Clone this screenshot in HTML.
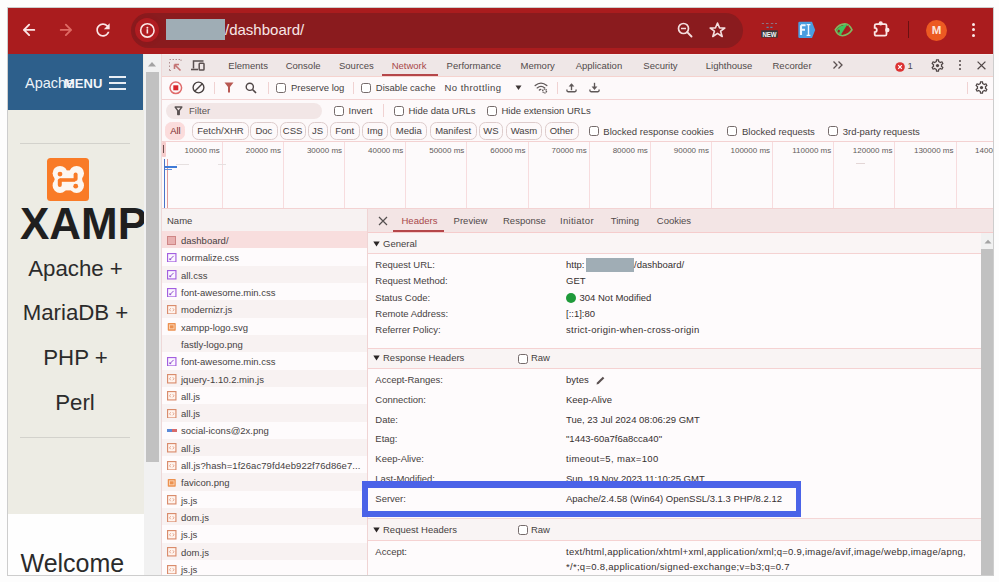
<!DOCTYPE html>
<html><head><meta charset="utf-8">
<style>
*{box-sizing:border-box;margin:0;padding:0}
html,body{width:999px;height:582px;overflow:hidden;background:#fdfdfd;font-family:"Liberation Sans",sans-serif}
.a{position:absolute}
.t{position:absolute;white-space:nowrap;font-size:9.5px;line-height:12px;color:#463f3f}
#frame{left:7px;top:7px;width:987px;height:569px;border:1px solid #cdcdcd;background:#fff}
#chrome{left:8px;top:8px;width:985px;height:46px;background:#aa1c1e}
#omni{left:130.5px;top:12.8px;width:612px;height:35px;border-radius:17.5px;background:#8a1b1e}
#page{left:8px;top:54px;width:135.5px;height:521px;background:#edece4;overflow:hidden}
#pscroll{left:143.5px;top:54px;width:17.5px;height:521px;background:#f1f1f1}
#dt{left:161px;top:54px;width:832px;height:521px;background:#fdf9fa;overflow:hidden}
.cb{position:absolute;width:10px;height:10px;border:1px solid #756b6b;border-radius:2.5px;background:#fff}
.sep{position:absolute;width:1px;background:#f0d2d2}
.chip{position:absolute;height:17.4px;border:1px solid #ddcccc;border-radius:6.5px;font-size:9.5px;line-height:15.6px;text-align:center;color:#463f3f;white-space:nowrap}
</style></head>
<body>
<div id="frame" class="a"></div>
<div id="chrome" class="a"></div>
<div id="omni" class="a"></div>

<!-- chrome toolbar icons -->
<svg class="a" style="left:20px;top:22px" width="18" height="16" viewBox="0 0 18 16"><path d="M3.95 7.9H14.25M3.95 7.9L9.15 2.7M3.95 7.9L9.15 13.1" stroke="#fbe6e6" stroke-width="1.9" fill="none" stroke-linecap="round" stroke-linejoin="round"/></svg>
<svg class="a" style="left:56px;top:22px" width="18" height="16" viewBox="0 0 18 16"><path d="M4.75 7.9H15.05M15.05 7.9L9.85 2.7M15.05 7.9L9.85 13.1" stroke="#df6a64" stroke-width="1.9" fill="none" stroke-linecap="round" stroke-linejoin="round"/></svg>
<svg class="a" style="left:93.2px;top:19.9px" width="20" height="20" viewBox="0 0 24 24"><path fill="#fbe6e6" d="M17.65 6.35C16.2 4.9 14.21 4 12 4c-4.42 0-7.99 3.58-7.99 8s3.57 8 7.99 8c3.730 0 6.84-2.55 7.73-6h-2.08c-.82 2.33-3.04 4-5.65 4-3.31 0-6-2.69-6-6s2.69-6 6-6c1.66 0 3.14.69 4.22 1.78L13 11h7V4l-2.35 2.35z"/></svg>
<div class="a" style="left:135.3px;top:17.9px;width:24px;height:24px;border-radius:50%;background:#b01c21;box-shadow:0 0 3px 1px #8a181c"></div>
<svg class="a" style="left:139px;top:21.5px" width="17" height="17" viewBox="0 0 17 17"><circle cx="8.35" cy="8.4" r="6.7" stroke="#fbe6e6" stroke-width="1.6" fill="none"/><circle cx="8.35" cy="5.7" r="1" fill="#fbe6e6"/><rect x="7.55" y="7.2" width="1.6" height="4.3" fill="#fbe6e6"/></svg>
<div class="a" style="left:166px;top:18.6px;width:59px;height:21.3px;background:#9fadb5"></div>
<div class="t" style="left:225px;top:21px;font-size:15px;line-height:18px;color:#f7e6e6">/dashboard/</div>
<svg class="a" style="left:676px;top:21px" width="18" height="18" viewBox="0 0 18 18"><circle cx="7.5" cy="7.5" r="5" stroke="#f4dede" stroke-width="1.7" fill="none"/><path d="M5 7.5H10" stroke="#f4dede" stroke-width="1.5"/><path d="M11.2 11.2L15.5 15.5" stroke="#f4dede" stroke-width="1.9" stroke-linecap="round"/></svg>
<svg class="a" style="left:708px;top:21px" width="19" height="18" viewBox="0 0 19 18"><path d="M9.5 2L11.6 7H16.8L12.6 10.2L14.2 15.5L9.5 12.3L4.8 15.5L6.4 10.2L2.2 7H7.4Z" stroke="#f4dede" stroke-width="1.6" fill="none" stroke-linejoin="round"/></svg>
<!-- NEW ext -->
<svg class="a" style="left:760px;top:21px" width="19" height="18" viewBox="0 0 19 18"><path d="M1.8 2.5h2.2M6 2.5h2.5M10.8 2.5h2.5M15 2.5h2" stroke="#8f7080" stroke-width="1.2"/><path d="M6.5 6.4h2.2M10.3 6.4h2.2" stroke="#5f86a8" stroke-width="1.3"/><rect x="1.2" y="9.3" width="16.6" height="7.3" fill="#3a3a3d"/><text x="9.5" y="15.6" font-family="Liberation Sans" font-weight="bold" font-size="7" fill="#f6f6f6" text-anchor="middle" textLength="14.2" lengthAdjust="spacingAndGlyphs">NEW</text></svg>
<!-- FI ext -->
<svg class="a" style="left:797px;top:21px" width="20" height="18" viewBox="0 0 20 18"><path d="M2.6 0.8H15L18.2 9L15 17.1H2.6Q1.3 17.1 1.3 15.8V2.1Q1.3 0.8 2.6 0.8Z" fill="#4a9de0"/><path d="M4 4.2H8.6M4 4.2V14M4 8.8H8" stroke="#eef6ff" stroke-width="2.1" fill="none"/><path d="M9.6 3.6H13.4M11.5 3.6V14.4M9.6 14.4H13.4" stroke="#eef6ff" stroke-width="1.4" fill="none"/></svg>
<!-- eye ext -->
<svg class="a" style="left:833px;top:22px" width="21" height="16" viewBox="0 0 21 16"><path d="M2.3 7.8C5 3.5 9 1.9 12 1.9C15 2 17.5 4.5 19 7.8C16.5 11.5 13 13.6 9.5 13.6C6 13.6 3.5 11 2.3 7.8Z" stroke="#7fba62" stroke-width="1.6" fill="none"/><path d="M14.6 2.1L7.4 13.4L3.2 8.2Q6 3.6 14.6 2.1Z" fill="#3cc55c"/><ellipse cx="5.8" cy="9" rx="1.1" ry="1.6" fill="#9a1c1e"/><path d="M15.6 3.5L9.5 12.8" stroke="#9a1c1e" stroke-width="0.9"/></svg>
<!-- puzzle -->
<svg class="a" style="left:870px;top:18px" width="22" height="22" viewBox="0 0 22 22"><path d="M6.3 6.1H15Q16.5 6.1 16.5 7.6V16.2Q16.5 17.7 15 17.7H6.2Q4.7 17.7 4.7 16.2V14.1A2.1 2.1 0 0 0 4.7 9.9V7.6Q4.7 6.1 6.3 6.1Z" stroke="#fbe6e6" stroke-width="1.8" fill="none"/><circle cx="10.7" cy="5.4" r="2.1" fill="#fbe6e6"/><circle cx="17.3" cy="12" r="2.2" fill="#fbe6e6"/></svg>
<div class="a" style="left:908.3px;top:20.5px;width:1.2px;height:17.5px;background:#6a1011"></div>
<div class="a" style="left:926px;top:19.5px;width:21px;height:21px;border-radius:50%;background:#ec5a22"></div>
<div class="t" style="left:926px;top:24px;width:21px;text-align:center;font-size:11.5px;line-height:12px;color:#fde6dc;font-weight:bold">M</div>
<div class="a" style="left:972px;top:22.8px;width:3.2px;height:3.2px;border-radius:50%;background:#fbeaea"></div>
<div class="a" style="left:972px;top:28.1px;width:3.2px;height:3.2px;border-radius:50%;background:#fbeaea"></div>
<div class="a" style="left:972px;top:34.1px;width:3.2px;height:3.2px;border-radius:50%;background:#fbeaea"></div>
<div id="page" class="a">
<div class="a" style="left:0;top:0;width:135px;height:56px;background:#2d5f8b"></div>
<div class="t" style="left:17px;top:21.7px;font-size:14.5px;line-height:14.5px;color:#eef3f8">Apache</div>
<div class="t" style="left:56px;top:23.1px;font-size:13px;line-height:13px;color:#f3f6fa;font-weight:bold">MENU</div>
<div class="a" style="left:101.2px;top:22px;width:17px;height:2px;background:#e8eef5"></div>
<div class="a" style="left:101.2px;top:27.8px;width:17px;height:2px;background:#e8eef5"></div>
<div class="a" style="left:101.2px;top:33.6px;width:17px;height:2px;background:#e8eef5"></div>
<div class="a" style="left:12.3px;top:89px;width:109.3px;height:1px;background:#d3d2cc"></div>
<div class="a" style="left:38.9px;top:104px;width:42.5px;height:43.4px;border-radius:3.5px;background:#f97b27"></div>
<svg class="a" style="left:38.9px;top:104px" width="43" height="44" viewBox="0 0 43 44"><g fill="#fdf7f1"><circle cx="13" cy="15.3" r="7.4"/><circle cx="29.6" cy="15.3" r="7.4"/><circle cx="13" cy="27.5" r="7.4"/><circle cx="29.6" cy="27.5" r="7.4"/><rect x="13" y="12.4" width="16.6" height="20"/><rect x="7.6" y="15.3" width="27.6" height="12.2"/></g><g fill="#f97b27"><circle cx="13" cy="16.1" r="2.4"/><rect x="10.8" y="20.4" width="4" height="8.6" rx="2"/><rect x="12.7" y="20.2" width="15.6" height="3.6"/><rect x="26.6" y="14.6" width="4" height="8.4" rx="2"/><circle cx="28.7" cy="28.2" r="2.4"/></g></svg>
<div class="t" style="left:11.9px;top:147.65px;font-size:44px;line-height:44px;font-weight:bold;color:#1f1f1f">XAMPP</div>
<div class="t" style="left:0;top:204.4px;width:135px;text-align:center;font-size:22.25px;line-height:22.25px;color:#2b2b2b">Apache +</div>
<div class="t" style="left:0;top:248.4px;width:135px;text-align:center;font-size:22.25px;line-height:22.25px;color:#2b2b2b">MariaDB +</div>
<div class="t" style="left:0;top:293px;width:135px;text-align:center;font-size:22.25px;line-height:22.25px;color:#2b2b2b">PHP +</div>
<div class="t" style="left:0;top:338.4px;width:134px;text-align:center;font-size:22.25px;line-height:22.25px;color:#2b2b2b">Perl</div>
<div class="a" style="left:12.3px;top:383px;width:109.3px;height:1px;background:#d3d2cc"></div>
<div class="a" style="left:0;top:459.5px;width:135.5px;height:62px;background:#fefefe"></div>
<div class="t" style="left:12.5px;top:496.9px;font-size:25px;line-height:25px;color:#2b2b2b">Welcome</div>
</div>
<div id="pscroll" class="a">
<svg class="a" style="left:3.5px;top:6.5px" width="10" height="6" viewBox="0 0 10 6"><path d="M1 5.5L5 1L9 5.5Z" fill="#a3a3a3"/></svg>
<div class="a" style="left:2px;top:18px;width:13.3px;height:389.5px;background:#c1c1c1"></div>
</div>
<div id="dt" class="a">
<div class="a" style="left:0;top:0;width:1px;height:521px;background:#eed8d8"></div>
<div class="a" style="left:1px;top:0;width:831px;height:23px;background:#efe7e7;border-top:1.5px solid #f8eded;border-bottom:1px solid #f5d3cf"></div>
<svg class="a" style="left:7px;top:4px" width="15" height="14" viewBox="0 0 15 14"><path d="M1.5 1.5h1.5M4.5 1.5h1.5M7.5 1.5h1.5M10.5 1.5h1.5M1.5 4v1.5M1.5 7.5v1.5M1.5 11v1.5h1.5" stroke="#b09090" stroke-width="1" fill="none"/><path d="M13 1.5v1.5" stroke="#b09090" stroke-width="1"/><path d="M6.5 6.5L12.5 12.5M6.5 6.5h4.5M6.5 6.5v4.5" stroke="#c47474" stroke-width="1.6" fill="none"/></svg>
<svg class="a" style="left:29px;top:5px" width="16" height="13" viewBox="0 0 16 13"><path d="M3.5 9.5V2h10" stroke="#5a5050" stroke-width="1.5" fill="none"/><path d="M1 10.5h7" stroke="#5a5050" stroke-width="1.6"/><rect x="9.2" y="4.2" width="4.8" height="6.8" rx="0.8" stroke="#5a5050" stroke-width="1.5" fill="none"/></svg>
<div class="t" style="left:67.3px;top:5.71px;color:#514a4a">Elements</div>
<div class="t" style="left:124.7px;top:5.71px;color:#514a4a">Console</div>
<div class="t" style="left:178px;top:5.71px;color:#514a4a">Sources</div>
<div class="t" style="left:230.7px;top:5.71px;color:#a8484a">Network</div>
<div class="t" style="left:285.6px;top:5.71px;color:#514a4a">Performance</div>
<div class="t" style="left:359.5px;top:5.71px;color:#514a4a">Memory</div>
<div class="t" style="left:414.7px;top:5.71px;color:#514a4a">Application</div>
<div class="t" style="left:482.3px;top:5.71px;color:#514a4a">Security</div>
<div class="t" style="left:544.8px;top:5.71px;color:#514a4a">Lighthouse</div>
<div class="t" style="left:611.5px;top:5.71px;color:#514a4a">Recorder</div>
<div class="a" style="left:220.8px;top:20.3px;width:56px;height:2px;background:#b5474a"></div>
<svg class="a" style="left:671px;top:6px" width="13" height="10" viewBox="0 0 13 10"><path d="M1.5 1.5L5 5L1.5 8.5M6.5 1.5L10 5L6.5 8.5" stroke="#5a5050" stroke-width="1.3" fill="none"/></svg>
<svg class="a" style="left:734px;top:7.6px" width="10" height="10" viewBox="0 0 10 10"><circle cx="5" cy="5" r="4.8" fill="#dc3232"/><path d="M3.2 3.2L6.8 6.8M6.8 3.2L3.2 6.8" stroke="#fff" stroke-width="1.2"/></svg>
<div class="t" style="left:746.5px;top:5.71px;color:#514a4a">1</div>
<svg class="a" style="left:768.9px;top:3.7px" width="15" height="15" viewBox="0 0 24 24"><path fill="#4f4646" d="M19.43 12.98c.04-.32.07-.64.07-.98 0-.34-.03-.66-.07-.98l2.11-1.65c.19-.15.24-.42.12-.64l-2-3.46a.5.5 0 0 0-.61-.22l-2.49 1c-.52-.4-1.08-.73-1.690-.98l-.38-2.65A.488.488 0 0 0 14 2h-4c-.25 0-.46.18-.49.42l-.38 2.65c-.61.25-1.17.59-1.69.98l-2.49-1a.566.566 0 0 0-.18-.03c-.17 0-.34.09-.43.25l-2 3.46c-.13.22-.07.49.12.64l2.11 1.65c-.04.32-.07.65-.07.98 0 .33.03.66.07.98l-2.11 1.65c-.19.15-.24.42-.12.64l2 3.46a.5.5 0 0 0 .61.22l2.49-1c.52.4 1.08.73 1.69.98l.38 2.65c.03.24.24.42.49.42h4c.25 0 .46-.18.49-.42l.38-2.650c.61-.25 1.17-.59 1.69-.98l2.49 1c.06.02.12.03.18.03.17 0 .34-.09.43-.25l2-3.46c.12-.22.07-.49-.12-.64l-2.11-1.65zm-1.98-1.71c.04.31.05.52.05.73 0 .21-.02.43-.05.73l-.14 1.13.89.7 1.08.84-.7 1.21-1.27-.51-1.04-.42-.9.68c-.43.32-.84.56-1.25.73l-1.06.43-.16 1.13-.2 1.35h-1.4l-.19-1.35-.16-1.13-1.06-.43c-.43-.18-.83-.41-1.23-.71l-.91-.7-1.06.43-1.27.51-.7-1.21 1.08-.84.89-.7-.14-1.13c-.03-.31-.05-.54-.05-.74s.02-.43.05-.73l.14-1.13-.89-.7-1.08-.84.7-1.21 1.27.51 1.04.42.9-.68c.43-.32.84-.56 1.25-.73l1.06-.43.16-1.13.2-1.35h1.390l.19 1.35.16 1.13 1.06.43c.43.18.83.41 1.23.71l.91.7 1.06-.43 1.27-.51.7 1.21-1.07.85-.89.7.14 1.13z"/><circle cx="12" cy="12" r="2.6" fill="#4f4646"/></svg>
<div class="a" style="left:797.6px;top:6.2px;width:2.2px;height:2.2px;border-radius:50%;background:#4f4646"></div>
<div class="a" style="left:797.6px;top:10.1px;width:2.2px;height:2.2px;border-radius:50%;background:#4f4646"></div>
<div class="a" style="left:797.6px;top:14px;width:2.2px;height:2.2px;border-radius:50%;background:#4f4646"></div>
<svg class="a" style="left:816.3px;top:6.5px" width="10" height="9" viewBox="0 0 10 9"><path d="M0.6 0.6L8.4 8.2M8.4 0.6L0.6 8.2" stroke="#4f4646" stroke-width="1.2"/></svg>
<div class="a" style="left:1px;top:45px;width:831px;height:1px;background:#f3d2d2"></div>
<svg class="a" style="left:7.5px;top:26.7px" width="14" height="14" viewBox="0 0 14 14"><circle cx="6.8" cy="6.8" r="5.8" stroke="#e06b6b" stroke-width="1.5" fill="none"/><rect x="4.3" y="4.3" width="5" height="5" fill="#d8252b"/></svg>
<svg class="a" style="left:30.5px;top:27px" width="13" height="13" viewBox="0 0 13 13"><circle cx="6.5" cy="6.5" r="5.4" stroke="#484040" stroke-width="1.4" fill="none"/><path d="M10.3 2.7L2.7 10.3" stroke="#484040" stroke-width="1.4"/></svg>
<div class="sep" style="left:52.5px;top:28px;height:12px"></div>
<svg class="a" style="left:63px;top:28px" width="10" height="11" viewBox="0 0 10 11"><path d="M0.5 0.5H9.5L6 5V10.5H4V5Z" fill="#b85852"/></svg>
<svg class="a" style="left:84px;top:27.5px" width="12" height="12" viewBox="0 0 12 12"><circle cx="4.8" cy="4.8" r="3.6" stroke="#4f4646" stroke-width="1.4" fill="none"/><path d="M7.5 7.5L11 11" stroke="#4f4646" stroke-width="1.6"/></svg>
<div class="sep" style="left:107px;top:28px;height:12px"></div>
<div class="cb" style="left:114.5px;top:28.7px"></div>
<div class="t" style="left:130px;top:28.21px;">Preserve log</div>
<div class="sep" style="left:191.7px;top:28px;height:12px"></div>
<div class="cb" style="left:200px;top:28.7px"></div>
<div class="t" style="left:214.8px;top:28.21px;">Disable cache</div>
<div class="t" style="left:283.5px;top:28.21px;;letter-spacing:0.45px">No throttling</div>
<svg class="a" style="left:354px;top:30.5px" width="7" height="6" viewBox="0 0 7 6"><path d="M0.5 0.5H6.5L3.5 5Z" fill="#3c3535"/></svg>
<svg class="a" style="left:373px;top:27px" width="15" height="13" viewBox="0 0 15 13"><path d="M1.2 4.6Q7 -0.3 12.8 4.6M3.2 6.9Q7 3.8 10.8 6.9M5.4 9.1Q6 8.6 6.8 8.4" stroke="#5f5858" stroke-width="1.35" fill="none" stroke-linecap="round"/><circle cx="10.6" cy="10" r="1.9" fill="none" stroke="#5f5858" stroke-width="1.4" stroke-dasharray="1.2 0.6"/></svg>
<div class="sep" style="left:396px;top:28px;height:12px"></div>
<svg class="a" style="left:405px;top:28.4px" width="11" height="11" viewBox="0 0 11 11"><path d="M5.5 8.2V2.5" stroke="#5f5858" stroke-width="1.35"/><path d="M2.6 4.6L5.5 1.2L8.4 4.6Z" fill="#5f5858"/><path d="M0.9 7.4V8.6Q0.9 9.7 2 9.7H9Q10.1 9.7 10.1 8.6V7.4" stroke="#5f5858" stroke-width="1.35" fill="none"/></svg>
<svg class="a" style="left:427.8px;top:28.4px" width="11" height="11" viewBox="0 0 11 11"><path d="M5.5 0.8V6" stroke="#5f5858" stroke-width="1.35"/><path d="M2.6 4.6L5.5 8L8.4 4.6Z" fill="#5f5858"/><path d="M0.9 7.4V8.6Q0.9 9.7 2 9.7H9Q10.1 9.7 10.1 8.6V7.4" stroke="#5f5858" stroke-width="1.35" fill="none"/></svg>
<div class="sep" style="left:806px;top:28px;height:12px"></div>
<svg class="a" style="left:813.3px;top:26.2px" width="15" height="15" viewBox="0 0 24 24"><path fill="#4f4646" d="M19.43 12.98c.04-.32.07-.64.07-.98 0-.34-.03-.66-.07-.98l2.11-1.65c.19-.15.24-.42.12-.64l-2-3.46a.5.5 0 0 0-.61-.22l-2.49 1c-.52-.4-1.08-.73-1.690-.98l-.38-2.65A.488.488 0 0 0 14 2h-4c-.25 0-.46.18-.49.42l-.38 2.65c-.61.25-1.17.59-1.69.98l-2.49-1a.566.566 0 0 0-.18-.03c-.17 0-.34.09-.43.25l-2 3.46c-.13.22-.07.49.12.64l2.11 1.65c-.04.32-.07.65-.07.98 0 .33.03.66.07.98l-2.11 1.65c-.19.15-.24.42-.12.64l2 3.46a.5.5 0 0 0 .61.22l2.49-1c.52.4 1.08.73 1.69.98l.38 2.65c.03.24.24.42.49.42h4c.25 0 .46-.18.49-.42l.38-2.650c.61-.25 1.17-.59 1.69-.98l2.49 1c.06.02.12.03.18.03.17 0 .34-.09.43-.25l2-3.46c.12-.22.07-.49-.12-.64l-2.11-1.65zm-1.98-1.71c.04.31.05.52.05.73 0 .21-.02.43-.05.73l-.14 1.13.89.7 1.08.84-.7 1.21-1.27-.51-1.04-.42-.9.68c-.43.32-.84.56-1.25.73l-1.06.43-.16 1.13-.2 1.35h-1.4l-.19-1.35-.16-1.13-1.06-.43c-.43-.18-.83-.41-1.23-.71l-.91-.7-1.06.43-1.27.51-.7-1.21 1.08-.84.89-.7-.14-1.13c-.03-.31-.05-.54-.05-.74s.02-.43.05-.73l.14-1.13-.89-.7-1.08-.84.7-1.21 1.27.51 1.04.42.9-.68c.43-.32.84-.56 1.25-.73l1.06-.43.16-1.13.2-1.35h1.390l.19 1.35.16 1.13 1.06.43c.43.18.83.41 1.23.71l.91.7 1.06-.43 1.27-.51.7 1.21-1.07.85-.89.7.14 1.13z"/><circle cx="12" cy="12" r="2.6" fill="#4f4646"/></svg>
<div class="a" style="left:5px;top:48.5px;width:156px;height:16.5px;border-radius:8.25px;background:#f2e6e6"></div>
<svg class="a" style="left:13.3px;top:52.2px" width="9" height="10" viewBox="0 0 9 10"><path d="M1.2 1.1H7.8L5.2 4.6V8.6H3.8V4.6Z" stroke="#5a5252" stroke-width="1.5" fill="none" stroke-linejoin="round"/></svg>
<div class="t" style="left:28px;top:51.21px;color:#5a5252">Filter</div>
<div class="cb" style="left:172.6px;top:51.8px"></div>
<div class="t" style="left:187.6px;top:51.21px;">Invert</div>
<div class="sep" style="left:221.8px;top:50px;height:13px"></div>
<div class="cb" style="left:232.6px;top:51.8px"></div>
<div class="t" style="left:247.5px;top:51.21px;">Hide data URLs</div>
<div class="cb" style="left:325.5px;top:51.8px"></div>
<div class="t" style="left:340.5px;top:51.21px;">Hide extension URLs</div>
<div class="chip" style="left:4.4px;top:68.2px;width:20.1px;border-color:#fbdcdc;background:#fbdcdc;color:#7a2a2a">All</div>
<div class="chip" style="left:31.4px;top:68.2px;width:56.2px">Fetch/XHR</div>
<div class="chip" style="left:89px;top:68.2px;width:27.7px">Doc</div>
<div class="chip" style="left:118.5px;top:68.2px;width:26.1px">CSS</div>
<div class="chip" style="left:146.7px;top:68.2px;width:19.9px">JS</div>
<div class="chip" style="left:168.7px;top:68.2px;width:30.0px">Font</div>
<div class="chip" style="left:200.8px;top:68.2px;width:26.4px">Img</div>
<div class="chip" style="left:229.3px;top:68.2px;width:37.0px">Media</div>
<div class="chip" style="left:268.7px;top:68.2px;width:46.9px">Manifest</div>
<div class="chip" style="left:318px;top:68.2px;width:24px">WS</div>
<div class="chip" style="left:345px;top:68.2px;width:36px">Wasm</div>
<div class="chip" style="left:383.5px;top:68.2px;width:34.2px">Other</div>
<div class="cb" style="left:427.6px;top:71.7px"></div>
<div class="t" style="left:442.3px;top:71.71px;">Blocked response cookies</div>
<div class="cb" style="left:566.3px;top:71.7px"></div>
<div class="t" style="left:581.0px;top:71.71px;">Blocked requests</div>
<div class="cb" style="left:667px;top:71.7px"></div>
<div class="t" style="left:681.7px;top:71.71px;">3rd-party requests</div>
<div class="a" style="left:1px;top:87.3px;width:831px;height:1px;background:#f3d2d2"></div>
<div class="a" style="left:1px;top:88.3px;width:831px;height:65.5px;background:#fdfafb"></div>
<div class="a" style="left:60.75px;top:88.3px;width:1px;height:65.5px;background:#f7dcde"></div>
<div class="t" style="left:-19.25px;top:91.5px;width:78px;text-align:right;font-size:8px;line-height:10px;color:#625a5a">10000 ms</div>
<div class="a" style="left:121.9px;top:88.3px;width:1px;height:65.5px;background:#f7dcde"></div>
<div class="t" style="left:41.9px;top:91.5px;width:78px;text-align:right;font-size:8px;line-height:10px;color:#625a5a">20000 ms</div>
<div class="a" style="left:183.05px;top:88.3px;width:1px;height:65.5px;background:#f7dcde"></div>
<div class="t" style="left:103.05px;top:91.5px;width:78px;text-align:right;font-size:8px;line-height:10px;color:#625a5a">30000 ms</div>
<div class="a" style="left:244.2px;top:88.3px;width:1px;height:65.5px;background:#f7dcde"></div>
<div class="t" style="left:164.2px;top:91.5px;width:78px;text-align:right;font-size:8px;line-height:10px;color:#625a5a">40000 ms</div>
<div class="a" style="left:305.35px;top:88.3px;width:1px;height:65.5px;background:#f7dcde"></div>
<div class="t" style="left:225.35px;top:91.5px;width:78px;text-align:right;font-size:8px;line-height:10px;color:#625a5a">50000 ms</div>
<div class="a" style="left:366.5px;top:88.3px;width:1px;height:65.5px;background:#f7dcde"></div>
<div class="t" style="left:286.5px;top:91.5px;width:78px;text-align:right;font-size:8px;line-height:10px;color:#625a5a">60000 ms</div>
<div class="a" style="left:427.65px;top:88.3px;width:1px;height:65.5px;background:#f7dcde"></div>
<div class="t" style="left:347.65px;top:91.5px;width:78px;text-align:right;font-size:8px;line-height:10px;color:#625a5a">70000 ms</div>
<div class="a" style="left:488.8px;top:88.3px;width:1px;height:65.5px;background:#f7dcde"></div>
<div class="t" style="left:408.8px;top:91.5px;width:78px;text-align:right;font-size:8px;line-height:10px;color:#625a5a">80000 ms</div>
<div class="a" style="left:549.95px;top:88.3px;width:1px;height:65.5px;background:#f7dcde"></div>
<div class="t" style="left:469.95px;top:91.5px;width:78px;text-align:right;font-size:8px;line-height:10px;color:#625a5a">90000 ms</div>
<div class="a" style="left:611.1px;top:88.3px;width:1px;height:65.5px;background:#f7dcde"></div>
<div class="t" style="left:531.1px;top:91.5px;width:78px;text-align:right;font-size:8px;line-height:10px;color:#625a5a">100000 ms</div>
<div class="a" style="left:672.25px;top:88.3px;width:1px;height:65.5px;background:#f7dcde"></div>
<div class="t" style="left:592.25px;top:91.5px;width:78px;text-align:right;font-size:8px;line-height:10px;color:#625a5a">110000 ms</div>
<div class="a" style="left:733.4px;top:88.3px;width:1px;height:65.5px;background:#f7dcde"></div>
<div class="t" style="left:653.4px;top:91.5px;width:78px;text-align:right;font-size:8px;line-height:10px;color:#625a5a">120000 ms</div>
<div class="a" style="left:794.55px;top:88.3px;width:1px;height:65.5px;background:#f7dcde"></div>
<div class="t" style="left:714.55px;top:91.5px;width:78px;text-align:right;font-size:8px;line-height:10px;color:#625a5a">130000 ms</div>
<div class="t" style="left:775.7px;top:91.5px;width:78px;text-align:right;font-size:8px;line-height:10px;color:#625a5a">140000 ms</div>
<div class="a" style="left:1px;top:153.5px;width:831px;height:1px;background:#f3d2d2"></div>
<div class="a" style="left:0.8px;top:88px;width:4px;height:15px;background:#f6cccc;border-radius:1px"></div>
<div class="a" style="left:2.2px;top:91px;width:1.2px;height:8px;background:#6a5050"></div>
<div class="a" style="left:3px;top:105px;width:1.3px;height:49px;background:#4a72c8"></div>
<div class="a" style="left:6px;top:105px;width:1.3px;height:49px;background:#e29a9a"></div>
<div class="a" style="left:3.6px;top:111.6px;width:12px;height:2px;background:#3f7ad6"></div>
<div class="a" style="left:3.6px;top:114.5px;width:7px;height:1.4px;background:#6a92d8"></div>
<div class="a" style="left:15px;top:109.8px;width:13px;height:1px;background:#e6e0e0"></div>
<div class="a" style="left:57px;top:109.8px;width:8px;height:1px;background:#e6e0e0"></div>
<div class="a" style="left:694.5px;top:109.3px;width:9px;height:1px;background:#e3d6d6"></div>

<div class="a" style="left:1px;top:154.5px;width:205px;height:22.5px;background:#f7f2f2"></div>
<div class="t" style="left:6px;top:160.71px;">Name</div>
<div class="a" style="left:1px;top:177.0px;width:205px;height:17.32px;background:#f8dede"></div>
<div class="a" style="left:6.2px;top:181.66px;width:9px;height:9px;border:1.2px solid #cf8686;background:#e8b0b0"></div>
<div class="t" style="left:20px;top:180.97px;color:#463f3f">dashboard/</div>
<div class="a" style="left:1px;top:194.32px;width:205px;height:17.32px;background:#fefbfc"></div>
<svg class="a" style="left:6.2px;top:198.88px" width="9.5" height="9.5" viewBox="0 0 10 10"><rect x="0.6" y="0.6" width="8.8" height="8.8" stroke="#a35fe0" stroke-width="1.2" fill="#fbf6ff"/><path d="M3 7L7 3M3 7V5.6M3 7H4.4" stroke="#8a48c8" stroke-width="1"/></svg>
<div class="t" style="left:20px;top:198.29px;color:#463f3f">normalize.css</div>
<div class="a" style="left:1px;top:211.64px;width:205px;height:17.32px;background:#f8f2f2"></div>
<svg class="a" style="left:6.2px;top:216.2px" width="9.5" height="9.5" viewBox="0 0 10 10"><rect x="0.6" y="0.6" width="8.8" height="8.8" stroke="#a35fe0" stroke-width="1.2" fill="#fbf6ff"/><path d="M3 7L7 3M3 7V5.6M3 7H4.4" stroke="#8a48c8" stroke-width="1"/></svg>
<div class="t" style="left:20px;top:215.61px;color:#463f3f">all.css</div>
<div class="a" style="left:1px;top:228.96px;width:205px;height:17.32px;background:#fefbfc"></div>
<svg class="a" style="left:6.2px;top:233.52px" width="9.5" height="9.5" viewBox="0 0 10 10"><rect x="0.6" y="0.6" width="8.8" height="8.8" stroke="#a35fe0" stroke-width="1.2" fill="#fbf6ff"/><path d="M3 7L7 3M3 7V5.6M3 7H4.4" stroke="#8a48c8" stroke-width="1"/></svg>
<div class="t" style="left:20px;top:232.93px;color:#463f3f">font-awesome.min.css</div>
<div class="a" style="left:1px;top:246.28px;width:205px;height:17.32px;background:#f8f2f2"></div>
<svg class="a" style="left:6.2px;top:250.84px" width="9.5" height="9.5" viewBox="0 0 10 10"><rect x="0.6" y="0.6" width="8.8" height="8.8" stroke="#d98c6c" stroke-width="1.2" fill="#fff4ee"/><path d="M3.9 3.4L2.7 5L3.9 6.6M6.1 3.4L7.3 5L6.1 6.6" stroke="#df9a80" stroke-width="0.9" fill="none"/></svg>
<div class="t" style="left:20px;top:250.25px;color:#463f3f">modernizr.js</div>
<div class="a" style="left:1px;top:263.6px;width:205px;height:17.32px;background:#fefbfc"></div>
<svg class="a" style="left:6.2px;top:268.16px" width="9.5" height="9.5" viewBox="0 0 10 10"><rect x="0.8" y="1" width="8.4" height="8.2" rx="0.8" fill="#ec9150"/><rect x="2.6" y="3" width="4.8" height="4.2" stroke="#fbd9bd" stroke-width="0.9" fill="none"/></svg>
<div class="t" style="left:20px;top:267.57px;color:#463f3f">xampp-logo.svg</div>
<div class="a" style="left:1px;top:280.92px;width:205px;height:17.32px;background:#f8f2f2"></div>
<div class="t" style="left:20px;top:284.89px;color:#463f3f">fastly-logo.png</div>
<div class="a" style="left:1px;top:298.24px;width:205px;height:17.32px;background:#fefbfc"></div>
<svg class="a" style="left:6.2px;top:302.8px" width="9.5" height="9.5" viewBox="0 0 10 10"><rect x="0.6" y="0.6" width="8.8" height="8.8" stroke="#a35fe0" stroke-width="1.2" fill="#fbf6ff"/><path d="M3 7L7 3M3 7V5.6M3 7H4.4" stroke="#8a48c8" stroke-width="1"/></svg>
<div class="t" style="left:20px;top:302.21px;color:#463f3f">font-awesome.min.css</div>
<div class="a" style="left:1px;top:315.56px;width:205px;height:17.32px;background:#f8f2f2"></div>
<svg class="a" style="left:6.2px;top:320.12px" width="9.5" height="9.5" viewBox="0 0 10 10"><rect x="0.6" y="0.6" width="8.8" height="8.8" stroke="#d98c6c" stroke-width="1.2" fill="#fff4ee"/><path d="M3.9 3.4L2.7 5L3.9 6.6M6.1 3.4L7.3 5L6.1 6.6" stroke="#df9a80" stroke-width="0.9" fill="none"/></svg>
<div class="t" style="left:20px;top:319.53px;color:#463f3f">jquery-1.10.2.min.js</div>
<div class="a" style="left:1px;top:332.88px;width:205px;height:17.32px;background:#fefbfc"></div>
<svg class="a" style="left:6.2px;top:337.44px" width="9.5" height="9.5" viewBox="0 0 10 10"><rect x="0.6" y="0.6" width="8.8" height="8.8" stroke="#d98c6c" stroke-width="1.2" fill="#fff4ee"/><path d="M3.9 3.4L2.7 5L3.9 6.6M6.1 3.4L7.3 5L6.1 6.6" stroke="#df9a80" stroke-width="0.9" fill="none"/></svg>
<div class="t" style="left:20px;top:336.85px;color:#463f3f">all.js</div>
<div class="a" style="left:1px;top:350.2px;width:205px;height:17.32px;background:#f8f2f2"></div>
<svg class="a" style="left:6.2px;top:354.76px" width="9.5" height="9.5" viewBox="0 0 10 10"><rect x="0.6" y="0.6" width="8.8" height="8.8" stroke="#d98c6c" stroke-width="1.2" fill="#fff4ee"/><path d="M3.9 3.4L2.7 5L3.9 6.6M6.1 3.4L7.3 5L6.1 6.6" stroke="#df9a80" stroke-width="0.9" fill="none"/></svg>
<div class="t" style="left:20px;top:354.17px;color:#463f3f">all.js</div>
<div class="a" style="left:1px;top:367.52px;width:205px;height:17.32px;background:#fefbfc"></div>
<div class="a" style="left:6.2px;top:375.48px;width:5px;height:2.4px;background:#5a8ad8"></div><div class="a" style="left:11.2px;top:375.48px;width:4.5px;height:2.4px;background:#d86a6a"></div>
<div class="t" style="left:20px;top:371.49px;color:#463f3f">social-icons@2x.png</div>
<div class="a" style="left:1px;top:384.84px;width:205px;height:17.32px;background:#f8f2f2"></div>
<svg class="a" style="left:6.2px;top:389.4px" width="9.5" height="9.5" viewBox="0 0 10 10"><rect x="0.6" y="0.6" width="8.8" height="8.8" stroke="#d98c6c" stroke-width="1.2" fill="#fff4ee"/><path d="M3.9 3.4L2.7 5L3.9 6.6M6.1 3.4L7.3 5L6.1 6.6" stroke="#df9a80" stroke-width="0.9" fill="none"/></svg>
<div class="t" style="left:20px;top:388.81px;color:#463f3f">all.js</div>
<div class="a" style="left:1px;top:402.16px;width:205px;height:17.32px;background:#fefbfc"></div>
<svg class="a" style="left:6.2px;top:406.72px" width="9.5" height="9.5" viewBox="0 0 10 10"><rect x="0.6" y="0.6" width="8.8" height="8.8" stroke="#d98c6c" stroke-width="1.2" fill="#fff4ee"/><path d="M3.9 3.4L2.7 5L3.9 6.6M6.1 3.4L7.3 5L6.1 6.6" stroke="#df9a80" stroke-width="0.9" fill="none"/></svg>
<div class="t" style="left:20px;top:406.13px;color:#463f3f;letter-spacing:0.07px">all.js?hash=1f26ac79fd4eb922f76d86e7...</div>
<div class="a" style="left:1px;top:419.48px;width:205px;height:17.32px;background:#f8f2f2"></div>
<svg class="a" style="left:6.2px;top:424.04px" width="9.5" height="9.5" viewBox="0 0 10 10"><rect x="0.8" y="1" width="8.4" height="8.2" rx="0.8" fill="#ec9150"/><rect x="2.6" y="3" width="4.8" height="4.2" stroke="#fbd9bd" stroke-width="0.9" fill="none"/></svg>
<div class="t" style="left:20px;top:423.45px;color:#463f3f">favicon.png</div>
<div class="a" style="left:1px;top:436.8px;width:205px;height:17.32px;background:#fefbfc"></div>
<svg class="a" style="left:6.2px;top:441.36px" width="9.5" height="9.5" viewBox="0 0 10 10"><rect x="0.6" y="0.6" width="8.8" height="8.8" stroke="#d98c6c" stroke-width="1.2" fill="#fff4ee"/><path d="M3.9 3.4L2.7 5L3.9 6.6M6.1 3.4L7.3 5L6.1 6.6" stroke="#df9a80" stroke-width="0.9" fill="none"/></svg>
<div class="t" style="left:20px;top:440.77px;color:#463f3f">js.js</div>
<div class="a" style="left:1px;top:454.12px;width:205px;height:17.32px;background:#f8f2f2"></div>
<svg class="a" style="left:6.2px;top:458.68px" width="9.5" height="9.5" viewBox="0 0 10 10"><rect x="0.6" y="0.6" width="8.8" height="8.8" stroke="#d98c6c" stroke-width="1.2" fill="#fff4ee"/><path d="M3.9 3.4L2.7 5L3.9 6.6M6.1 3.4L7.3 5L6.1 6.6" stroke="#df9a80" stroke-width="0.9" fill="none"/></svg>
<div class="t" style="left:20px;top:458.09px;color:#463f3f">dom.js</div>
<div class="a" style="left:1px;top:471.44px;width:205px;height:17.32px;background:#fefbfc"></div>
<svg class="a" style="left:6.2px;top:476.0px" width="9.5" height="9.5" viewBox="0 0 10 10"><rect x="0.6" y="0.6" width="8.8" height="8.8" stroke="#d98c6c" stroke-width="1.2" fill="#fff4ee"/><path d="M3.9 3.4L2.7 5L3.9 6.6M6.1 3.4L7.3 5L6.1 6.6" stroke="#df9a80" stroke-width="0.9" fill="none"/></svg>
<div class="t" style="left:20px;top:475.41px;color:#463f3f">js.js</div>
<div class="a" style="left:1px;top:488.76px;width:205px;height:17.32px;background:#f8f2f2"></div>
<svg class="a" style="left:6.2px;top:493.32px" width="9.5" height="9.5" viewBox="0 0 10 10"><rect x="0.6" y="0.6" width="8.8" height="8.8" stroke="#d98c6c" stroke-width="1.2" fill="#fff4ee"/><path d="M3.9 3.4L2.7 5L3.9 6.6M6.1 3.4L7.3 5L6.1 6.6" stroke="#df9a80" stroke-width="0.9" fill="none"/></svg>
<div class="t" style="left:20px;top:492.73px;color:#463f3f">dom.js</div>
<div class="a" style="left:1px;top:506.08px;width:205px;height:17.32px;background:#fefbfc"></div>
<svg class="a" style="left:6.2px;top:510.64px" width="9.5" height="9.5" viewBox="0 0 10 10"><rect x="0.6" y="0.6" width="8.8" height="8.8" stroke="#d98c6c" stroke-width="1.2" fill="#fff4ee"/><path d="M3.9 3.4L2.7 5L3.9 6.6M6.1 3.4L7.3 5L6.1 6.6" stroke="#df9a80" stroke-width="0.9" fill="none"/></svg>
<div class="t" style="left:20px;top:510.05px;color:#463f3f">js.js</div>
<div class="a" style="left:205.5px;top:154.5px;width:1px;height:367px;background:#f0d4d4"></div>
<div class="a" style="left:206.5px;top:154.5px;width:625.5px;height:24.5px;background:#f3e5e5;border-bottom:1px solid #f5cccc"></div>
<svg class="a" style="left:216.5px;top:161.8px" width="10" height="10" viewBox="0 0 10 10"><path d="M1 1L9 9M9 1L1 9" stroke="#555050" stroke-width="1.2"/></svg>
<div class="t" style="left:240.5px;top:161.21px;color:#a8484a">Headers</div>
<div class="t" style="left:292.6px;top:161.21px;color:#514a4a">Preview</div>
<div class="t" style="left:342px;top:161.21px;color:#514a4a">Response</div>
<div class="t" style="left:399px;top:161.21px;color:#514a4a;letter-spacing:0.3px">Initiator</div>
<div class="t" style="left:449.8px;top:161.21px;color:#514a4a">Timing</div>
<div class="t" style="left:495.8px;top:161.21px;color:#514a4a">Cookies</div>
<div class="a" style="left:232px;top:175.6px;width:51.4px;height:2px;background:#b5474a"></div>
<div class="a" style="left:206.5px;top:179.5px;width:613.5px;height:341.5px;background:#fefbfc"></div>
<div class="a" style="left:206.5px;top:178.5px;width:613.5px;height:21.5px;background:#faf5f5;border-bottom:1px solid #f5d2d2"></div>
<svg class="a" style="left:211.5px;top:187.0px" width="7" height="6" viewBox="0 0 7 6"><path d="M0.3 0.5H6.7L3.5 5.5Z" fill="#2a2525"/></svg>
<div class="t" style="left:222px;top:184.11px;color:#463f3f">General</div>
<div class="t" style="left:214.3px;top:205.21px;color:#463f3f">Request URL:</div>
<div class="t" style="left:405px;top:205.21px;color:#363030">http:</div>
<div class="a" style="left:424.6px;top:204.2px;width:48.4px;height:13.4px;background:#a0adb5"></div>
<div class="t" style="left:473px;top:205.21px;color:#363030">/dashboard/</div>
<div class="t" style="left:214.3px;top:221.41px;color:#463f3f">Request Method:</div>
<div class="t" style="left:405px;top:221.41px;color:#363030">GET</div>
<div class="t" style="left:214.3px;top:237.61px;color:#463f3f">Status Code:</div>
<div class="a" style="left:405.2px;top:238.6px;width:10px;height:10px;border-radius:50%;background:#1f9a3a"></div>
<div class="t" style="left:418.5px;top:237.61px;color:#363030">304 Not Modified</div>
<div class="t" style="left:214.3px;top:253.81px;color:#463f3f">Remote Address:</div>
<div class="t" style="left:405px;top:253.81px;color:#363030">[::1]:80</div>
<div class="t" style="left:214.3px;top:270.01px;color:#463f3f">Referrer Policy:</div>
<div class="t" style="left:405px;top:270.01px;color:#363030;letter-spacing:0.29px">strict-origin-when-cross-origin</div>
<div class="a" style="left:206.5px;top:293.5px;width:613.5px;height:21.5px;background:#f9f4f4;border-top:1px solid #f5d2d2;border-bottom:1px solid #f5d2d2"></div>
<svg class="a" style="left:211.5px;top:301.25px" width="7" height="6" viewBox="0 0 7 6"><path d="M0.3 0.5H6.7L3.5 5.5Z" fill="#2a2525"/></svg>
<div class="t" style="left:222px;top:298.36px;color:#463f3f">Response Headers</div>
<div class="cb" style="left:357.3px;top:299.65px"></div>
<div class="t" style="left:369.9px;top:298.36px;">Raw</div>
<div class="t" style="left:214.3px;top:320.31px;color:#463f3f">Accept-Ranges:</div>
<div class="t" style="left:405px;top:320.31px;color:#363030">bytes</div>
<svg class="a" style="left:433.5px;top:320.8px" width="11" height="11" viewBox="0 0 11 11"><path d="M1.5 9.5L2 7.5L7.8 1.7L9.3 3.2L3.5 9Z" fill="#5a5050"/></svg>
<div class="t" style="left:214.3px;top:340.01px;color:#463f3f">Connection:</div>
<div class="t" style="left:405px;top:340.01px;color:#363030">Keep-Alive</div>
<div class="t" style="left:214.3px;top:359.71px;color:#463f3f">Date:</div>
<div class="t" style="left:405px;top:359.71px;color:#363030">Tue, 23 Jul 2024 08:06:29 GMT</div>
<div class="t" style="left:214.3px;top:379.41px;color:#463f3f">Etag:</div>
<div class="t" style="left:405px;top:379.41px;color:#363030">"1443-60a7f6a8cca40"</div>
<div class="t" style="left:214.3px;top:399.11px;color:#463f3f">Keep-Alive:</div>
<div class="t" style="left:405px;top:399.11px;color:#363030;letter-spacing:0.33px">timeout=5, max=100</div>
<div class="t" style="left:214.3px;top:418.81px;color:#463f3f">Last-Modified:</div>
<div class="t" style="left:405px;top:418.81px;color:#363030">Sun, 19 Nov 2023 11:10:25 GMT</div>
<div class="t" style="left:214.3px;top:438.51px;color:#463f3f">Server:</div>
<div class="t" style="left:405px;top:438.51px;color:#363030">Apache/2.4.58 (Win64) OpenSSL/3.1.3 PHP/8.2.12</div>
<div class="a" style="left:206.5px;top:464px;width:613.5px;height:22.5px;background:#f9f4f4;border-top:1px solid #f5d6d6;border-bottom:1px solid #f5d2d2"></div>
<svg class="a" style="left:211.5px;top:472.75px" width="7" height="6" viewBox="0 0 7 6"><path d="M0.3 0.5H6.7L3.5 5.5Z" fill="#2a2525"/></svg>
<div class="t" style="left:222px;top:469.86px;color:#463f3f">Request Headers</div>
<div class="cb" style="left:357.3px;top:471.15px"></div>
<div class="t" style="left:369.9px;top:469.86px;">Raw</div>
<div class="t" style="left:214.3px;top:492.4px;color:#463f3f">Accept:</div>
<div class="t" style="left:405px;top:492.4px;color:#363030;letter-spacing:0.27px">text/html,application/xhtml+xml,application/xml;q=0.9,image/avif,image/webp,image/apng,</div>
<div class="t" style="left:405px;top:507px;color:#363030;letter-spacing:0.29px">*/*;q=0.8,application/signed-exchange;v=b3;q=0.7</div>
<div class="a" style="left:820px;top:179px;width:12px;height:342px;background:#f1f1f1"></div>
<svg class="a" style="left:822.6px;top:185.2px" width="8" height="5" viewBox="0 0 8 5"><path d="M0.5 4.5L4 0.8L7.5 4.5Z" fill="#a3a3a3"/></svg>
<div class="a" style="left:820.2px;top:195.4px;width:11.8px;height:325.6px;background:#c1c1c1"></div>
<div class="a" style="left:200.7px;top:426.8px;width:439px;height:36.6px;border:6.8px solid #4b63e8;border-top-width:7.2px;border-right-width:5.9px;border-bottom-width:6.5px"></div>
</div>
</body></html>
